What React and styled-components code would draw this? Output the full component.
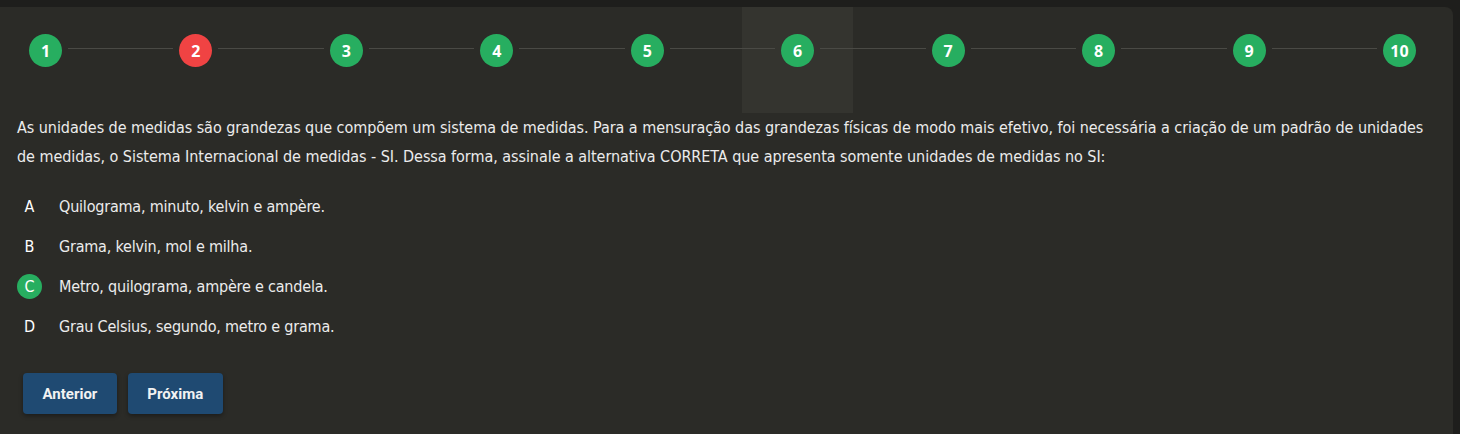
import React from "react";
import styled, { createGlobalStyle } from "styled-components";

const Global = createGlobalStyle`
  html, body { margin: 0; padding: 0; background: #1e1e1c; }
  body { font-family: "Liberation Sans Narrow", "DejaVu Sans Condensed", sans-serif; }
`;

const Page = styled.div`
  padding-top: 7px;
  padding-right: 7px;
  height: 434px;
  box-sizing: border-box;
  overflow: hidden;
`;

const Card = styled.div`
  background: #2b2b27;
  border-top-right-radius: 8px;
  height: 100%;
`;

const Stepper = styled.div`
  position: relative;
  z-index: 0;
  display: flex;
  align-items: flex-start;
  height: 106px;
  box-sizing: border-box;
  padding: 27px 37px 0 29px;
`;

const StepCircle = styled.div`
  position: relative;
  flex: 0 0 33px;
  width: 33px;
  height: 33px;
  border-radius: 50%;
  background: ${(p) => (p.$wrong ? "#f04343" : "#27ae60")};
  color: #fff;
  display: flex;
  align-items: center;
  justify-content: center;
  font-family: "Open Sans", sans-serif;
  font-weight: 700;
  font-size: 16px;
  cursor: pointer;
  &::before {
    content: "";
    display: ${(p) => (p.$current ? "block" : "none")};
    position: absolute;
    z-index: -1;
    left: -39px;
    right: -39px;
    top: -27px;
    height: 106px;
    background: #34342f;
  }
`;

const Connector = styled.div`
  flex: 1;
  height: 1px;
  margin: 14px 6px 0;
  background: #4a4a45;
`;

const Body = styled.div`
  padding: 0 17px;
`;

const Question = styled.p`
  margin: 0;
  color: #ececec;
  font-size: 16px;
  letter-spacing: -0.05px;
  line-height: 29px;
`;

const Options = styled.div`
  margin-top: 15px;
  display: flex;
  flex-direction: column;
`;

const Option = styled.div`
  display: flex;
  align-items: center;
  height: 40px;
  gap: 17px;
  color: #ececec;
  font-size: 16px;
  letter-spacing: -0.2px;
  cursor: pointer;
`;

const Letter = styled.span`
  width: 25px;
  height: 25px;
  border-radius: 50%;
  display: flex;
  align-items: center;
  justify-content: center;
  color: #fff;
  letter-spacing: 0;
  background: ${(p) => (p.$selected ? "#27ae60" : "transparent")};
`;

const Actions = styled.div`
  display: flex;
  gap: 11px;
  margin-top: 27px;
  padding-left: 6px;
`;

const Button = styled.button`
  height: 41px;
  padding: 0 19.5px;
  border: none;
  border-radius: 4px;
  background: #1f4a72;
  color: #f2f2f2;
  font-family: Roboto, "Liberation Sans", sans-serif;
  font-weight: 700;
  font-size: 15px;
  box-shadow: 0 2px 4px rgba(0, 0, 0, 0.35);
  cursor: pointer;
`;

const steps = [1, 2, 3, 4, 5, 6, 7, 8, 9, 10];
const options = [
  ["A", "Quilograma, minuto, kelvin e ampère."],
  ["B", "Grama, kelvin, mol e milha."],
  ["C", "Metro, quilograma, ampère e candela."],
  ["D", "Grau Celsius, segundo, metro e grama."],
];

export default function App() {
  return (
    <Page>
      <Global />
      <Card>
        <Stepper>
          {steps.map((n, i) => (
            <React.Fragment key={n}>
              <StepCircle $wrong={n === 2} $current={n === 6}>
                {n}
              </StepCircle>
              {i < steps.length - 1 && <Connector />}
            </React.Fragment>
          ))}
        </Stepper>
        <Body>
          <Question>
            As unidades de medidas são grandezas que compõem um sistema de medidas. Para a mensuração das grandezas físicas de modo mais efetivo, foi necessária a criação de um padrão de unidades de medidas, o Sistema Internacional de medidas - SI. Dessa forma, assinale a alternativa CORRETA que apresenta somente unidades de medidas no SI:
          </Question>
          <Options>
            {options.map(([l, t]) => (
              <Option key={l}>
                <Letter $selected={l === "C"}>{l}</Letter>
                <span>{t}</span>
              </Option>
            ))}
          </Options>
          <Actions>
            <Button>Anterior</Button>
            <Button>Próxima</Button>
          </Actions>
        </Body>
      </Card>
    </Page>
  );
}
